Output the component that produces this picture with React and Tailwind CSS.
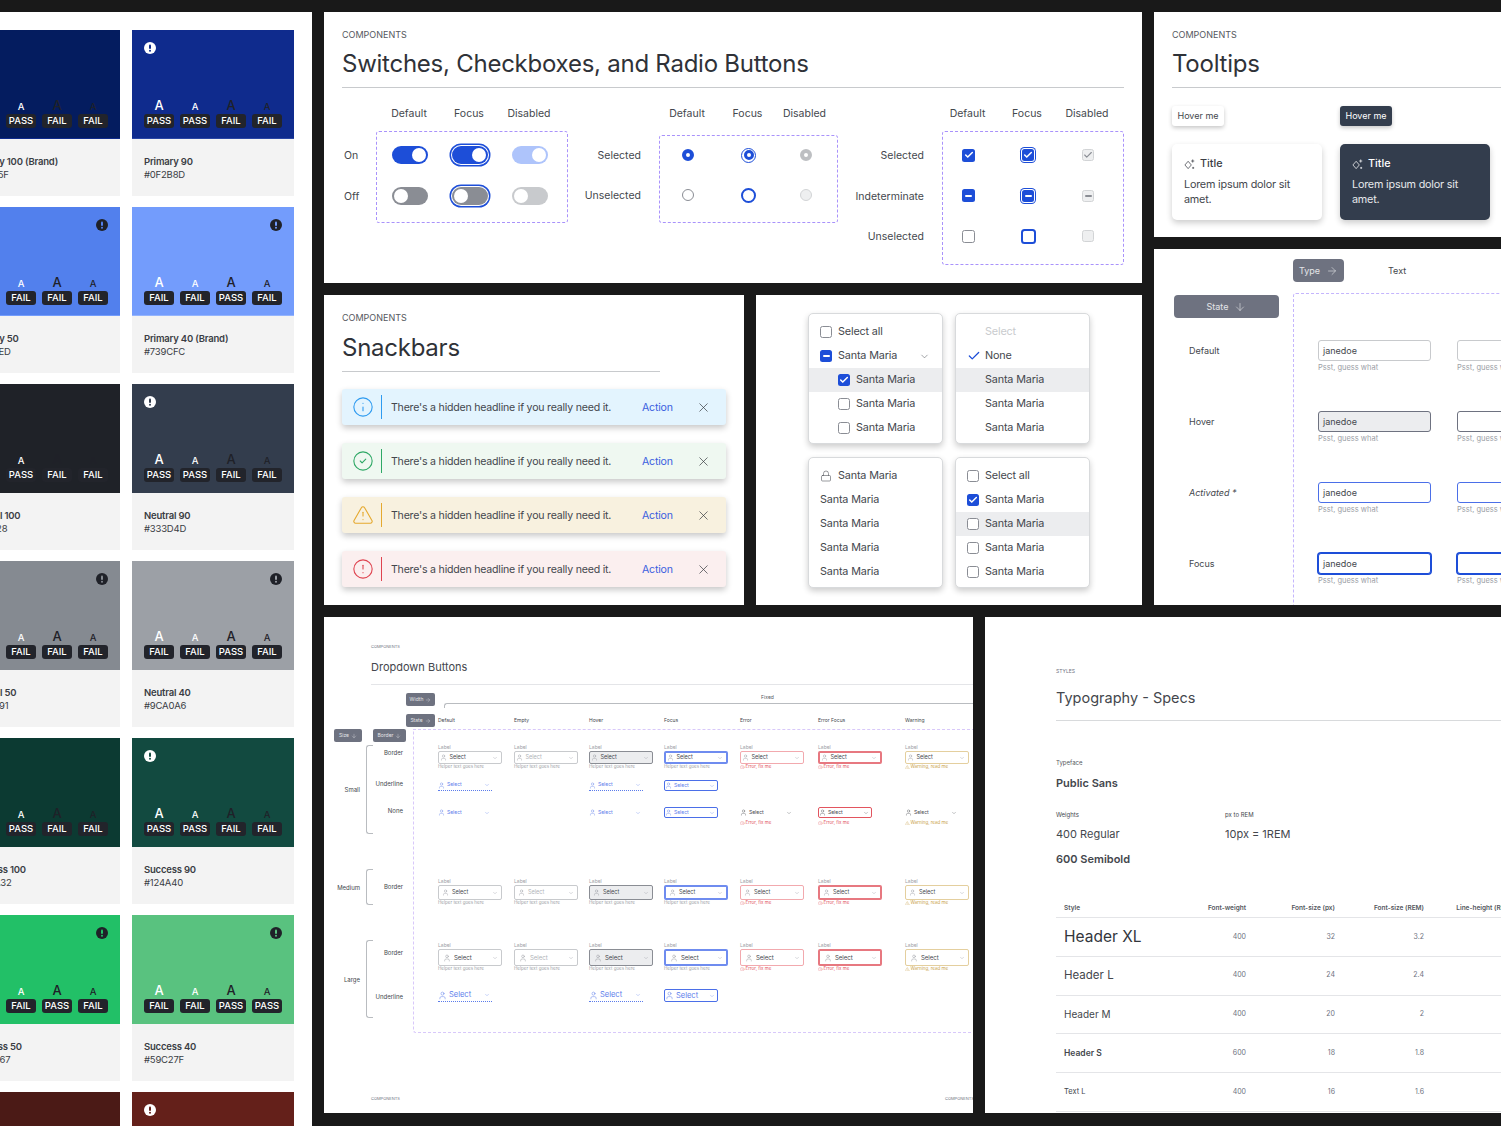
import {
  ArrowDown,
  ArrowRight,
  Check,
  ChevronDown,
  CircleAlert,
  CircleCheck,
  Info,
  Lock,
  TriangleAlert,
  User,
  X,
} from 'lucide-react'

const SWATCHES = [
  { name: 'Primary 100 (Brand)', hex: '#041C5F', bg: 'bg-[#041C5F]', fill: '#041C5F', edge: 'border-[#0F2B8D]', res: ['PASS', 'PASS', 'FAIL', 'FAIL'], alert: 'white-left' },
  { name: 'Primary 90', hex: '#0F2B8D', bg: 'bg-[#0F2B8D]', fill: '#0F2B8D', edge: 'border-[#2A46A5]', res: ['PASS', 'PASS', 'FAIL', 'FAIL'], alert: 'white-left' },
  { name: 'Primary 50', hex: '#5280ED', bg: 'bg-[#5280ED]', fill: '#5280ED', edge: 'border-[#739CFC]', res: ['FAIL', 'FAIL', 'FAIL', 'FAIL'], alert: 'dark-right' },
  { name: 'Primary 40 (Brand)', hex: '#739CFC', bg: 'bg-[#739CFC]', fill: '#739CFC', edge: 'border-[#94B4FD]', res: ['FAIL', 'FAIL', 'PASS', 'FAIL'], alert: 'dark-right' },
  { name: 'Neutral 100', hex: '#1F2228', bg: 'bg-[#1F2228]', fill: '#1F2228', edge: 'border-[#1F2228]', res: ['PASS', 'PASS', 'FAIL', 'FAIL'], alert: 'white-left' },
  { name: 'Neutral 90', hex: '#333D4D', bg: 'bg-[#333D4D]', fill: '#333D4D', edge: 'border-[#333D4D]', res: ['PASS', 'PASS', 'FAIL', 'FAIL'], alert: 'white-left' },
  { name: 'Neutral 50', hex: '#858A91', bg: 'bg-[#858A91]', fill: '#858A91', edge: 'border-[#858A91]', res: ['FAIL', 'FAIL', 'FAIL', 'FAIL'], alert: 'dark-right' },
  { name: 'Neutral 40', hex: '#9CA0A6', bg: 'bg-[#9CA0A6]', fill: '#9CA0A6', edge: 'border-[#9CA0A6]', res: ['FAIL', 'FAIL', 'PASS', 'FAIL'], alert: 'dark-right' },
  { name: 'Success 100', hex: '#0C3A32', bg: 'bg-[#0C3A32]', fill: '#0C3A32', edge: 'border-[#0C3A32]', res: ['PASS', 'PASS', 'FAIL', 'FAIL'], alert: 'white-left' },
  { name: 'Success 90', hex: '#124A40', bg: 'bg-[#124A40]', fill: '#124A40', edge: 'border-[#124A40]', res: ['PASS', 'PASS', 'FAIL', 'FAIL'], alert: 'white-left' },
  { name: 'Success 50', hex: '#22C067', bg: 'bg-[#22C067]', fill: '#22C067', edge: 'border-[#22C067]', res: ['FAIL', 'FAIL', 'PASS', 'FAIL'], alert: 'dark-right' },
  { name: 'Success 40', hex: '#59C27F', bg: 'bg-[#59C27F]', fill: '#59C27F', edge: 'border-[#59C27F]', res: ['FAIL', 'FAIL', 'PASS', 'PASS'], alert: 'dark-right' },
  { name: 'Danger 100', hex: '#4B1A16', bg: 'bg-[#4B1A16]', fill: '#4B1A16', edge: 'border-[#4B1A16]', res: ['PASS', 'PASS', 'FAIL', 'FAIL'], alert: 'white-left' },
  { name: 'Danger 90', hex: '#64201A', bg: 'bg-[#64201A]', fill: '#64201A', edge: 'border-[#64201A]', res: ['PASS', 'PASS', 'FAIL', 'FAIL'], alert: 'white-left' },
]

const AlertDot = ({ color, hole }) => (
  <svg width="12" height="12" viewBox="0 0 12 12">
    <circle cx="6" cy="6" r="6" fill={color} />
    <rect x="5" y="2.5" width="2" height="4.6" rx="1" fill={hole} />
    <circle cx="6" cy="8.8" r="1" fill={hole} />
  </svg>
)

const Swatch = ({ s }) => (
  <div className="flex flex-col">
    <div className={`${s.bg} ${s.edge} h-[109px] border-b px-3 pt-3 flex flex-col justify-between`}>
      <div className={`flex ${s.alert === 'dark-right' ? 'justify-end' : ''}`}>
        <AlertDot color={s.alert === 'dark-right' ? '#1F2128' : '#FFFFFF'} hole={s.fill} />
      </div>
      <div className="flex gap-[6px] pb-[10px]">
        {s.res.map((r, i) => (
          <div key={i} className="w-[30px] flex flex-col items-center">
            <div className={`h-[16px] flex items-end leading-none font-medium ${i % 2 === 0 ? 'text-[13px]' : 'text-[9.5px] pb-px'} ${i < 2 ? 'text-white' : 'text-[#1F2128]'}`}>
              A
            </div>
            <div className="mt-[2px] w-[30px] h-[14px] rounded-[3px] bg-[#22242B] text-white text-[9.5px] font-medium flex items-center justify-center">
              {r}
            </div>
          </div>
        ))}
      </div>
    </div>
    <div className="h-[57px] bg-[#F3F3F3] pl-3 pt-4 text-[9.5px] tracking-[-0.2px] leading-[13px] text-[#3A3D44]">
      <div className="font-semibold whitespace-nowrap">{s.name}</div>
      <div>{s.hex}</div>
    </div>
  </div>
)

const PanelHead = ({ title, ruleClass }) => (
  <>
    <div className="h-3 text-[9px] leading-3 text-[#55585E]">COMPONENTS</div>
    <div className="mt-2 h-[30px] text-[24px] tracking-[-0.25px] leading-[30px] text-[#2F3238] whitespace-nowrap">{title}</div>
    <div className={`mt-2 h-px bg-[#C8CACD] ${ruleClass}`} />
  </>
)

const Toggle = ({ state }) => {
  const on = state.startsWith('on')
  const bg = {
    on: 'bg-[#1D4ED8]',
    'on-focus': 'bg-[#1D4ED8] shadow-[0_0_0_1px_white,0_0_0_2.5px_#1D4ED8]',
    'on-disabled': 'bg-[#AEC4FB]',
    off: 'bg-[#8A8D94]',
    'off-focus': 'bg-[#8A8D94] shadow-[0_0_0_1px_white,0_0_0_2.5px_#1D4ED8]',
    'off-disabled': 'bg-[#C8CACD]',
  }[state]
  return (
    <div className={`w-9 h-[18px] rounded-full p-[2px] flex ${on ? 'justify-end' : 'justify-start'} ${bg}`}>
      <div className="w-[14px] h-[14px] rounded-full bg-white" />
    </div>
  )
}

const RADIO = {
  sel: <div className="w-3 h-3 rounded-full border-[4px] border-[#1D4ED8] bg-white" />,
  selFocus: (
    <div className="w-[15px] h-[15px] rounded-full border-[1.5px] border-[#1D4ED8] flex items-center justify-center">
      <div className="w-[10px] h-[10px] rounded-full border-[3px] border-[#1D4ED8] bg-white" />
    </div>
  ),
  selDis: <div className="w-3 h-3 rounded-full border-[4px] border-[#BDBFC2] bg-white" />,
  un: <div className="w-3 h-3 rounded-full border border-[#8A8D94] bg-white" />,
  unFocus: <div className="w-[15px] h-[15px] rounded-full border-2 border-[#1D4ED8] bg-white" />,
  unDis: <div className="w-3 h-3 rounded-full border border-[#D2D4D6] bg-[#EEEFF0]" />,
}

const Box = ({ fill, children, size = 'w-[13px] h-[13px]', extra = '' }) => (
  <div className={`${size} rounded-[2.5px] flex items-center justify-center ${fill} ${extra}`}>{children}</div>
)
const Tick = ({ color = 'white', w = 3.6 }) => <Check size={10} color={color} strokeWidth={w} />
const Bar = ({ color = 'bg-white' }) => <div className={`w-[7px] h-[2px] rounded-sm ${color}`} />

const CHECKS = {
  sel: <Box fill="bg-[#1D4ED8]"><Tick /></Box>,
  selFocus: <Box fill="bg-[#1D4ED8]" size="w-3 h-3" extra="shadow-[0_0_0_1px_white,0_0_0_2px_#1D4ED8]"><Tick /></Box>,
  selDis: <Box fill="bg-[#EEEFF0] border border-[#D2D4D6]" size="w-3 h-3"><Tick color="#8A8D94" w={2.6} /></Box>,
  ind: <Box fill="bg-[#1D4ED8]"><Bar /></Box>,
  indFocus: <Box fill="bg-[#1D4ED8]" size="w-3 h-3" extra="shadow-[0_0_0_1px_white,0_0_0_2px_#1D4ED8]"><Bar /></Box>,
  indDis: <Box fill="bg-[#EEEFF0] border border-[#D2D4D6]" size="w-3 h-3"><Bar color="bg-[#8A8D94]" /></Box>,
  un: <Box fill="bg-white border border-[#8A8D94]" />,
  unFocus: <Box fill="bg-white border-2 border-[#1D4ED8]" size="w-[15px] h-[15px]" extra="rounded-[3.5px]" />,
  unDis: <Box fill="bg-[#EEEFF0] border border-[#D2D4D6]" size="w-3 h-3" />,
}

const Matrix = ({ labelCol, labelPad, labels, cols, rows, boxClass, rowClass }) => (
  <div className="flex shrink-0 text-[10.5px] text-[#44474D]">
    <div className={`${labelCol} ${labelPad}`}>
      {labels.map((l) => (
        <div key={l} className={`${rowClass} flex items-center whitespace-nowrap`}>{l}</div>
      ))}
    </div>
    <div>
      <div className="flex h-[18px] items-center pt-[2px]">
        {['Default', 'Focus', 'Disabled'].map((h, i) => (
          <div key={h} className={`${cols[i]} text-center`}>{h}</div>
        ))}
      </div>
      <div className={`border border-dashed border-[#A992FB] rounded-[3px] ${boxClass}`}>
        {rows.map((r, i) => (
          <div key={i} className={`${rowClass} flex items-center`}>
            {r.map((c, j) => (
              <div key={j} className={`${cols[j]} flex justify-center`}>{c}</div>
            ))}
          </div>
        ))}
      </div>
    </div>
  </div>
)

const SwitchesPanel = () => (
  <section className="h-[271px] bg-white px-[18px] pt-[17px]">
    <PanelHead title="Switches, Checkboxes, and Radio Buttons" />
    <div className="mt-4 flex gap-[18px]">
      <Matrix
        labelCol="w-[34px] flex flex-col gap-[23px]"
        labelPad="pt-[43px] pl-[2px]"
        labels={['On', 'Off']}
        cols={['w-[66px]', 'w-[54px]', 'w-[66px]']}
        rows={[
          [<Toggle state="on" />, <Toggle state="on-focus" />, <Toggle state="on-disabled" />],
          [<Toggle state="off" />, <Toggle state="off-focus" />, <Toggle state="off-disabled" />],
        ]}
        boxClass="mt-[9px] h-[92px] w-[192px] pt-[14px] flex flex-col gap-[23px]"
        rowClass="h-[18px]"
      />
      <Matrix
        labelCol="w-[73px] flex flex-col gap-6 items-end"
        labelPad="pt-[44px] pr-[18px]"
        labels={['Selected', 'Unselected']}
        cols={['w-[56px]', 'w-[65px]', 'w-[49px]']}
        rows={[
          [RADIO.sel, RADIO.selFocus, RADIO.selDis],
          [RADIO.un, RADIO.unFocus, RADIO.unDis],
        ]}
        boxClass="mt-[13px] h-[88px] w-[179px] pt-[11px] flex flex-col gap-6"
        rowClass="h-4"
      />
      <Matrix
        labelCol="w-[86px] flex flex-col gap-[26.5px] items-end"
        labelPad="pt-[45px] pr-[18px]"
        labels={['Selected', 'Indeterminate', 'Unselected']}
        cols={['w-[51px]', 'w-[68px]', 'w-[52px]']}
        rows={[
          [CHECKS.sel, CHECKS.selFocus, CHECKS.selDis],
          [CHECKS.ind, CHECKS.indFocus, CHECKS.indDis],
          [CHECKS.un, CHECKS.unFocus, CHECKS.unDis],
        ]}
        boxClass="mt-[9px] h-[134px] w-[182px] pt-4 flex flex-col gap-[26.5px]"
        rowClass="h-[14px]"
      />
    </div>
  </section>
)

const SNACKS = [
  { Icon: Info, bg: 'bg-[#E3F4FE]', icon: 'text-[#2E9BF0]', line: 'bg-[#2E9BF0]' },
  { Icon: CircleCheck, bg: 'bg-[#EFF8F1]', icon: 'text-[#2FA866]', line: 'bg-[#2FA866]' },
  { Icon: TriangleAlert, bg: 'bg-[#F8F1DF]', icon: 'text-[#E5A92F]', line: 'bg-[#E5A92F]' },
  { Icon: CircleAlert, bg: 'bg-[#FBEFEF]', icon: 'text-[#DF4450]', line: 'bg-[#DF4450]' },
]

const SnackbarsPanel = () => (
  <section className="w-[420px] bg-white px-[18px] pt-[17px]">
    <div className="h-3 text-[9px] leading-3 text-[#55585E]">COMPONENTS</div>
    <div className="mt-[9px] h-[30px] text-[24px] tracking-[-0.25px] leading-[30px] text-[#2F3238]">Snackbars</div>
    <div className="mt-2 h-px w-[318px] bg-[#C8CACD]" />
    <div className="mt-[17px] flex flex-col gap-[18px]">
      {SNACKS.map(({ Icon, bg, icon, line }, i) => (
        <div key={i} className={`h-9 ${bg} rounded-[3px] shadow-[0_3px_6px_rgba(0,0,0,0.22)] flex items-center pl-[10px] text-[#44474D]`}>
          <Icon size={22} strokeWidth={1.2} className={icon} />
          <div className={`ml-[7px] w-px h-6 ${line}`} />
          <div className="ml-[9px] w-[251px] pt-px text-[10.6px] tracking-[-0.22px] whitespace-nowrap">There&apos;s a hidden headline if you really need it.</div>
          <div className="w-[54px] pt-px text-[10.6px] tracking-[-0.22px] text-[#3B5FE0]">Action</div>
          <X size={15} strokeWidth={1.1} className="text-[#33363C]" />
        </div>
      ))}
    </div>
  </section>
)

const MenuBox = ({ children }) => (
  <div className="w-[135px] h-[131px] rounded-[5px] border border-[#D8DADC] bg-white shadow-[0_3px_6px_rgba(0,0,0,0.2)] pt-[6px] text-[10.8px] tracking-[-0.15px] text-[#44474D] overflow-hidden">
    {children}
  </div>
)
const MenuRow = ({ pad = 'pl-[11px]', hi, children }) => (
  <div className={`h-6 flex items-center gap-[6px] ${pad} ${hi ? 'bg-[#ECEDEF]' : ''}`}>{children}</div>
)
const MenuCheck = ({ state }) =>
  state === 'on' ? (
    <Box fill="bg-[#1D4ED8]" size="w-3 h-3"><Tick /></Box>
  ) : state === 'ind' ? (
    <Box fill="bg-[#1D4ED8]" size="w-3 h-3"><Bar /></Box>
  ) : (
    <Box fill="bg-white border border-[#8A8D94]" size="w-3 h-3" />
  )

const MenusPanel = () => (
  <section className="flex-1 bg-white flex justify-center pt-[18px]">
    <div className="grid grid-cols-[135px_135px] grid-rows-[131px_131px] gap-x-3 gap-y-[13px]">
      <MenuBox>
        <MenuRow><MenuCheck />Select all</MenuRow>
        <MenuRow>
          <MenuCheck state="ind" />
          Santa Maria
          <ChevronDown size={11} strokeWidth={1.2} className="ml-auto mr-[12px] text-[#55585E]" />
        </MenuRow>
        <MenuRow pad="pl-[29px]" hi><MenuCheck state="on" />Santa Maria</MenuRow>
        <MenuRow pad="pl-[29px]"><MenuCheck />Santa Maria</MenuRow>
        <MenuRow pad="pl-[29px]"><MenuCheck />Santa Maria</MenuRow>
      </MenuBox>
      <MenuBox>
        <MenuRow pad="pl-[29px]"><span className="text-[#C9CBCE]">Select</span></MenuRow>
        <MenuRow><Check size={14} strokeWidth={2.2} className="text-[#1D4ED8] shrink-0" /><span className="ml-[-2px]">None</span></MenuRow>
        <MenuRow pad="pl-[29px]" hi>Santa Maria</MenuRow>
        <MenuRow pad="pl-[29px]">Santa Maria</MenuRow>
        <MenuRow pad="pl-[29px]">Santa Maria</MenuRow>
      </MenuBox>
      <MenuBox>
        <MenuRow><Lock size={12} strokeWidth={1.2} className="text-[#55585E] shrink-0" />Santa Maria</MenuRow>
        <MenuRow>Santa Maria</MenuRow>
        <MenuRow>Santa Maria</MenuRow>
        <MenuRow>Santa Maria</MenuRow>
        <MenuRow>Santa Maria</MenuRow>
      </MenuBox>
      <MenuBox>
        <MenuRow><MenuCheck />Select all</MenuRow>
        <MenuRow><MenuCheck state="on" />Santa Maria</MenuRow>
        <MenuRow hi><MenuCheck />Santa Maria</MenuRow>
        <MenuRow><MenuCheck />Santa Maria</MenuRow>
        <MenuRow><MenuCheck />Santa Maria</MenuRow>
      </MenuBox>
    </div>
  </section>
)

const Sparkle = () => (
  <svg width="11" height="11" viewBox="0 0 12 12" fill="none" stroke="currentColor" strokeWidth="0.8">
    <path d="M4.5 2.5 8 6.5 4.5 10.5 1 6.5Z" />
    <path d="M9.5 0.5v3.4M7.8 2.2h3.4M10 8.6v2.2M8.9 9.7h2.2" />
  </svg>
)

const TooltipCard = ({ dark }) => (
  <div className={`w-[150px] h-[76px] rounded-[5px] pl-[12px] pt-[13px] shadow-[0_3px_6px_rgba(0,0,0,0.2)] ${dark ? 'bg-[#333D4D] text-white' : 'bg-white text-[#3A3D44]'}`}>
    <div className="flex items-center gap-[5px] h-[15px] text-[10.8px] font-medium">
      <Sparkle />
      <span>Title</span>
    </div>
    <div className={`mt-[5px] text-[10.8px] tracking-[-0.2px] leading-[15px] ${dark ? 'text-[#E6E8EB]' : 'text-[#44474D]'}`}>Lorem ipsum dolor sit<br />amet.</div>
  </div>
)

const TooltipsPanel = () => (
  <section className="h-[225px] bg-white pl-[18px] pt-[17px] overflow-hidden">
    <PanelHead title="Tooltips" />
    <div className="mt-[18px] grid grid-cols-[150px_150px] gap-x-[18px] gap-y-[18px]">
      <div className="w-[52px] h-5 rounded-[3px] bg-white shadow-[0_2px_4px_rgba(0,0,0,0.22)] text-[9px] text-[#44474D] flex items-center justify-center">Hover me</div>
      <div className="w-[52px] h-5 rounded-[3px] bg-[#333D4D] shadow-[0_2px_4px_rgba(0,0,0,0.22)] text-[9px] text-white flex items-center justify-center">Hover me</div>
      <TooltipCard />
      <TooltipCard dark />
    </div>
  </section>
)

const Pill = ({ w, children, Icon }) => (
  <div className={`${w} h-[23px] rounded-[4px] bg-[#6E7280] text-[9px] text-[#E4E5E8] flex items-center justify-center gap-[6px]`}>
    {children}
    <Icon size={12} strokeWidth={1.2} />
  </div>
)

const INPUT_ROWS = [
  { label: 'Default', cls: 'border-[#C8CACD] bg-white', empty: 'border-[#C8CACD] bg-white', text: 'not-italic' },
  { label: 'Hover', cls: 'border-[#6E7280] bg-[#ECEDEF]', empty: 'border-[#6E7280] bg-white', text: 'not-italic' },
  { label: 'Activated *', cls: 'border-[#4B6FE8] bg-white', empty: 'border-[#4B6FE8] bg-white', text: 'italic' },
  { label: 'Focus', cls: 'border-[#1D4ED8] bg-white shadow-[0_0_0_1px_#1D4ED8]', empty: 'border-[#1D4ED8] bg-white shadow-[0_0_0_1px_#1D4ED8]', text: 'not-italic' },
]

const InputsPanel = () => (
  <section className="flex-1 bg-white overflow-hidden">
    <div className="pt-[10px] pl-[139px] flex items-center">
      <Pill w="w-[51px]" Icon={ArrowRight}>Type</Pill>
      <div className="ml-[44px] text-[9px] text-[#44474D]">Text</div>
    </div>
    <div className="mt-[11px] flex">
      <div className="w-[139px] shrink-0 pl-5 pt-[2px]">
        <Pill w="w-[105px]" Icon={ArrowDown}>State</Pill>
        <div className="mt-[22px] pl-[15px] text-[9px] text-[#44474D]">
          {INPUT_ROWS.map((r) => (
            <div key={r.label} className={`h-[71px] ${r.text}`}>
              <div className="h-[21px] flex items-center">{r.label}</div>
            </div>
          ))}
        </div>
      </div>
      <div className="w-[300px] h-[400px] border-l border-t border-dashed border-[#C4B5FD] rounded-tl-[3px] pl-6 pt-[46px]">
        {INPUT_ROWS.map((r) => (
          <div key={r.label} className="h-[71px] flex gap-[26px]">
            {[0, 1].map((c) => (
              <div key={c} className="w-[113px] shrink-0">
                <div className={`h-[21px] rounded-[3px] border ${c === 0 ? r.cls : r.empty} pl-[4px] flex items-center text-[9px] text-[#44474D]`}>{c === 0 ? 'janedoe' : ''}</div>
                <div className="mt-[2px] h-[10px] text-[7.5px] leading-[10px] text-[#9CA0A6] whitespace-nowrap">Psst, guess what</div>
              </div>
            ))}
          </div>
        ))}
      </div>
    </div>
  </section>
)

const FIELD_STATES = ['default', 'empty', 'hover', 'focus', 'error', 'errorFocus', 'warning']
const COLS = 'grid grid-cols-[76px_75px_75px_76px_78px_87px_70px]'
const FIELD_STYLE = {
  default: 'border border-[#C8CACD]',
  empty: 'border border-[#C8CACD]',
  hover: 'border border-[#8A8D94] bg-[#ECEDEF]',
  focus: 'border-2 border-[#6F8CEF]',
  error: 'border border-[#F2A9AE]',
  errorFocus: 'border-2 border-[#E77880]',
  warning: 'border border-[#E4CF9E]',
}
const SIZE_STYLE = {
  small: 'h-[13px] text-[5.5px] gap-[2.5px] pl-[1px]',
  medium: 'h-[15px] text-[5.5px] gap-[3px] pl-[3px]',
  large: 'h-[17px] text-[6px] gap-[3px] pl-[4px]',
}

const Helper = ({ state }) => {
  if (state === 'error' || state === 'errorFocus')
    return <div className="flex items-center gap-[1px] h-[6px] text-[4.5px] text-[#E2555F] whitespace-nowrap"><CircleAlert size={4.5} strokeWidth={1.5} />Error, fix me</div>
  if (state === 'warning')
    return <div className="flex items-center gap-[1px] h-[6px] text-[4.5px] text-[#C9A24A] whitespace-nowrap"><TriangleAlert size={4.5} strokeWidth={1.5} />Warning, read me</div>
  return <div className="h-[6px] leading-[6px] text-[4.5px] text-[#9CA0A6] whitespace-nowrap">Helper text goes here</div>
}

const FieldCell = ({ state, size }) => (
  <div className="w-[64px]">
    <div className="h-[6px] leading-[6px] text-[5px] text-[#9CA0A6]">Label</div>
    <div className={`mt-[1px] rounded-[2px] flex items-center ${SIZE_STYLE[size]} ${FIELD_STYLE[state]}`}>
      <User size={size === 'large' ? 8 : 7} strokeWidth={1.3} className="text-[#8A8D94] shrink-0" />
      <span className={state === 'empty' ? 'text-[#B0B3B8]' : 'text-[#44474D]'}>Select</span>
      <ChevronDown size={6} strokeWidth={1.3} className="ml-auto mr-[3px] text-[#8A8D94]" />
    </div>
    <Helper state={state} />
  </div>
)

const InlineCell = ({ state, under, big }) => {
  const focus = state === 'focus' || state === 'errorFocus'
  const blue = state === 'default' || state === 'focus' || state === 'hover'
  return (
    <div className="w-[54px]">
      <div
        className={`flex items-center gap-[2px] ${big ? 'h-[13px] text-[7.5px]' : 'h-[11px] text-[5px]'} ${blue ? 'text-[#5B7CEB]' : 'text-[#44474D]'} ${
          focus ? `rounded-[2px] border ${state === 'focus' ? 'border-[#4B6FE8]' : 'border-[#E2555F]'}` : ''
        } ${under ? 'border-b border-dotted border-[#5B7CEB]' : ''}`}
      >
        <User size={big ? 9 : 7} strokeWidth={1.3} className="shrink-0" />
        <span>Select</span>
        <ChevronDown size={6} strokeWidth={1.3} className="ml-auto mr-[2px]" />
      </div>
      {!focus && !blue && <div className="mt-[2px]"><Helper state={state} /></div>}
      {state === 'errorFocus' && <div className="mt-[2px]"><Helper state={state} /></div>}
    </div>
  )
}

const MiniPill = ({ w, children, Icon }) => (
  <div className={`${w} h-[13px] shrink-0 rounded-[2px] bg-[#6E7280] text-[#E4E5E8] text-[5px] flex items-center justify-center gap-[2px]`}>
    {children}
    <Icon size={6} strokeWidth={1.4} />
  </div>
)

const SizeGroup = ({ name, mt, height, pad, rows }) => (
  <div className={`${mt} flex ${height}`}>
    <div className="w-[42px] pr-[6px] shrink-0 flex items-center justify-end text-[6px] text-[#44474D]">{name}</div>
    <div className="w-[7px] shrink-0 border-l border-y border-[#B9BCC0] rounded-l-[3px]" />
    <div className={`w-[30px] shrink-0 ${pad} text-[6px] text-[#44474D] text-right whitespace-nowrap`}>
      {rows.map((r) => (
        <div key={r.label} className={`h-[6px] leading-[6px] ${r.mt}`}>{r.label}</div>
      ))}
    </div>
  </div>
)

const DropdownPanel = () => (
  <section className="w-[649px] shrink-0 bg-white pt-[27px] overflow-hidden">
    <div className="pl-[47px]">
      <div className="h-[6px] leading-[6px] text-[4px] text-[#6E7280]">COMPONENTS</div>
      <div className="mt-[10px] h-[14px] leading-[14px] text-[11px] text-[#44474D]">Dropdown Buttons</div>
      <div className="mt-[10px] h-px bg-[#E4E5E8]" />
    </div>
    <div className="mt-2 flex pl-[82px]">
      <MiniPill w="w-[29px]" Icon={ArrowRight}>Width</MiniPill>
      <div className="ml-[9px] flex-1">
        <div className="h-[10px] flex items-center justify-center pl-[118px] text-[5px] text-[#55585E]">Fixed</div>
        <div className="h-[5px] border-l border-t border-[#B9BCC0] rounded-tl-[3px]" />
      </div>
    </div>
    <div className="mt-[6px] flex items-center pl-[82px]">
      <MiniPill w="w-[29px]" Icon={ArrowRight}>State</MiniPill>
      <div className={`ml-[3px] ${COLS} text-[5px] text-[#44474D]`}>
        {['Default', 'Empty', 'Hover', 'Focus', 'Error', 'Error Focus', 'Warning'].map((h) => (
          <div key={h}>{h}</div>
        ))}
      </div>
    </div>
    <div className="mt-[2px] flex">
      <div className="w-[89px] shrink-0">
        <div className="flex pl-[10px] gap-[11px]">
          <MiniPill w="w-[28px]" Icon={ArrowDown}>Size</MiniPill>
          <MiniPill w="w-[33px]" Icon={ArrowDown}>Border</MiniPill>
        </div>
        <SizeGroup
          name="Small"
          mt="mt-[3px]"
          height="h-[89px]"
          pad="pt-[5px]"
          rows={[{ label: 'Border', mt: '' }, { label: 'Underline', mt: 'mt-[25px]' }, { label: 'None', mt: 'mt-[21px]' }]}
        />
        <SizeGroup name="Medium" mt="mt-[35px]" height="h-[36px]" pad="pt-[15px]" rows={[{ label: 'Border', mt: '' }]} />
        <SizeGroup
          name="Large"
          mt="mt-[35px]"
          height="h-[78px]"
          pad="pt-[10px]"
          rows={[{ label: 'Border', mt: '' }, { label: 'Underline', mt: 'mt-[38px]' }]}
        />
      </div>
      <div className="flex-1 h-[304px] border-l border-y border-dashed border-[#D8C8FA] rounded-bl-[3px] pl-6 pt-[14px]">
        <div className={COLS}>
          {FIELD_STATES.map((s) => <FieldCell key={s} state={s} size="small" />)}
        </div>
        <div className={`mt-[10px] ${COLS}`}>
          <InlineCell state="default" under />
          <div />
          <InlineCell state="hover" under />
          <InlineCell state="focus" />
        </div>
        <div className={`mt-[16px] h-[19px] ${COLS}`}>
          {FIELD_STATES.map((s) => (s === 'empty' ? <div key={s} /> : <InlineCell key={s} state={s} />))}
        </div>
        <div className={`mt-[52px] ${COLS}`}>
          {FIELD_STATES.map((s) => <FieldCell key={s} state={s} size="medium" />)}
        </div>
        <div className={`mt-[36px] ${COLS}`}>
          {FIELD_STATES.map((s) => <FieldCell key={s} state={s} size="large" />)}
        </div>
        <div className={`mt-[17px] ${COLS}`}>
          <InlineCell state="default" under big />
          <div />
          <InlineCell state="hover" under big />
          <InlineCell state="focus" big />
        </div>
      </div>
    </div>
    <div className="mt-[63px] pl-[47px] flex text-[4px] leading-[6px] text-[#6E7280]">
      <div className="w-[574px] shrink-0">COMPONENTS</div>
      <div className="whitespace-nowrap">COMPONENTS</div>
    </div>
  </section>
)

const TYPE_ROWS = [
  { style: 'Header XL', cls: 'text-[15.5px] text-[#33363C]', w: '400', px: '32', rem: '3.2' },
  { style: 'Header L', cls: 'text-[11.5px] text-[#44474D]', w: '400', px: '24', rem: '2.4' },
  { style: 'Header M', cls: 'text-[10px] text-[#44474D]', w: '400', px: '20', rem: '2' },
  { style: 'Header S', cls: 'text-[8.5px] font-semibold text-[#44474D]', w: '600', px: '18', rem: '1.8' },
  { style: 'Text L', cls: 'text-[7.5px] text-[#44474D]', w: '400', px: '16', rem: '1.6' },
]
const TYPE_COLS = 'grid grid-cols-[101px_89px_89px_89px_89px] items-center'

const TypographyPanel = () => (
  <section className="flex-1 bg-white pt-[51px] pl-[71px] overflow-hidden">
    <div className="h-[7px] leading-[7px] text-[5px] text-[#6E7280]">STYLES</div>
    <div className="mt-[13px] h-5 leading-5 text-[14.5px] text-[#44474D] whitespace-nowrap">Typography - Specs</div>
    <div className="mt-3 h-px bg-[#D8DADC]" />
    <div className="mt-[38px] h-2 leading-2 text-[6px] text-[#55585E]">Typeface</div>
    <div className="mt-[9px] h-[14px] leading-[14px] text-[11px] font-semibold text-[#44474D]">Public Sans</div>
    <div className="mt-[21px] grid grid-cols-[169px_200px] text-[#44474D]">
      <div className="h-2 leading-2 text-[6px]">Weights</div>
      <div className="h-2 leading-2 text-[6px]">px to REM</div>
      <div className="mt-2 h-[14px] leading-[14px] text-[11px]">400 Regular</div>
      <div className="mt-2 h-[14px] leading-[14px] text-[11px]">10px = 1REM</div>
      <div className="mt-[11px] h-[14px] leading-[14px] text-[11px] font-semibold">600 Semibold</div>
    </div>
    <div className="mt-[38px] w-[457px]">
      <div className={`${TYPE_COLS} h-[14px] pb-[5px] border-b border-[#E4E5E8] text-[6.5px] font-semibold text-[#55585E]`}>
        <div className="pl-2">Style</div>
        <div className="text-right">Font-weight</div>
        <div className="text-right">Font-size (px)</div>
        <div className="text-right">Font-size (REM)</div>
        <div className="text-right whitespace-nowrap">Line-height (REM)</div>
      </div>
      {TYPE_ROWS.map((r) => (
        <div key={r.style} className={`${TYPE_COLS} h-[38.75px] border-b border-[#E4E5E8] text-[7px] text-[#6E7280]`}>
          <div className={`pl-2 whitespace-nowrap ${r.cls}`}>{r.style}</div>
          <div className="text-right">{r.w}</div>
          <div className="text-right">{r.px}</div>
          <div className="text-right">{r.rem}</div>
        </div>
      ))}
    </div>
  </section>
)

export default function App() {
  return (
    <div className="w-[1501px] h-[1126px] overflow-hidden bg-[#191919] pt-3 flex gap-3 font-[family-name:Inter,sans-serif]">
      <aside className="w-[312px] shrink-0 h-[1114px] bg-white overflow-hidden pt-[18px]">
        <div className="ml-[-42px] grid grid-cols-[162px_162px] gap-x-3 gap-y-[11px]">
          {SWATCHES.map((s) => <Swatch key={s.name} s={s} />)}
        </div>
      </aside>
      <main className="flex-1 min-w-0 flex flex-col gap-3">
        <div className="h-[593px] flex gap-3">
          <div className="w-[818px] shrink-0 flex flex-col gap-3">
            <SwitchesPanel />
            <div className="flex-1 min-h-0 flex gap-3">
              <SnackbarsPanel />
              <MenusPanel />
            </div>
          </div>
          <div className="flex-1 min-w-0 flex flex-col gap-3">
            <TooltipsPanel />
            <InputsPanel />
          </div>
        </div>
        <div className="h-[496px] flex gap-3">
          <DropdownPanel />
          <TypographyPanel />
        </div>
      </main>
    </div>
  )
}
